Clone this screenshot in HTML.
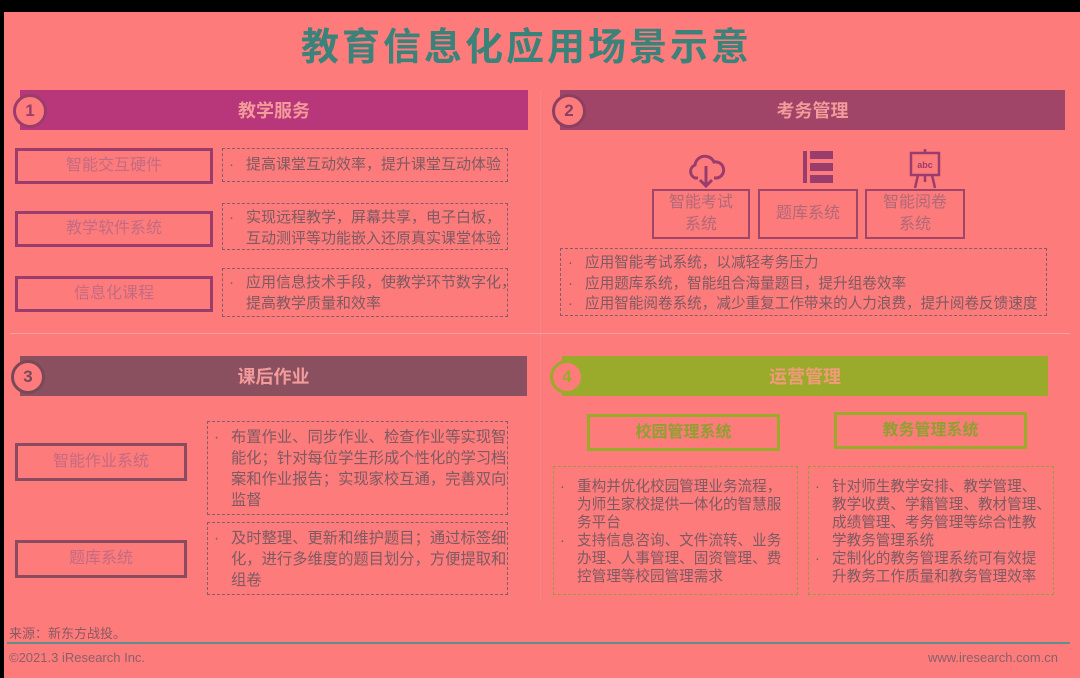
<!DOCTYPE html>
<html><head><meta charset="utf-8"><style>
*{margin:0;padding:0;box-sizing:border-box}
body{width:1080px;height:678px;background:#fd7b7b;position:relative;overflow:hidden;font-family:"Liberation Sans","Noto Sans CJK SC",sans-serif;color:#7d5a62}
.a{position:absolute}
.bar{position:absolute;height:40px;color:#f39a9a;font-weight:bold;font-size:18px;display:flex;align-items:center;justify-content:center}
.circ{position:absolute;width:34px;height:34px;border-radius:50%;border:3px solid;background:#fd7b7b;font-weight:bold;font-size:17px;display:flex;align-items:center;justify-content:center}
.box{position:absolute;border:3px solid #9a3c6c;display:flex;align-items:center;justify-content:center;font-size:16px;color:#c46a82;text-align:center;line-height:22px}
.dash{position:absolute;border:1.5px dashed #8a5a68;font-size:15px;line-height:21px;padding:3px 0 0 23px;white-space:nowrap}
.dash p{position:relative}
.dash p:before{content:"·";position:absolute;left:-17px}
</style></head><body>
<div class="a" style="left:0;top:0;width:1080px;height:12px;background:#000"></div>
<div class="a" style="left:0;top:0;width:4px;height:678px;background:#000"></div>
<div class="a" style="left:0;top:16px;width:1053px;text-align:center;font-size:38px;font-weight:bold;color:#3a827a;letter-spacing:3px">教育信息化应用场景示意</div>

<div class="a" style="left:540px;top:90px;width:1px;height:510px;background:#f08a8a"></div>
<div class="a" style="left:10px;top:333px;width:1060px;height:1px;background:#f2a0a0"></div>

<!-- 1 -->
<div class="bar" style="left:20px;top:90px;width:508px;background:#b8367a">教学服务</div>
<div class="circ" style="left:13px;top:94px;border-color:#9a3c6c;color:#9a3c6c">1</div>
<div class="box" style="left:15px;top:148px;width:198px;height:36px">智能交互硬件</div>
<div class="box" style="left:15px;top:211px;width:198px;height:36px">教学软件系统</div>
<div class="box" style="left:15px;top:276px;width:198px;height:36px">信息化课程</div>
<div class="dash" style="left:222px;top:148px;width:286px;height:34px;padding-top:5px"><p>提高课堂互动效率，提升课堂互动体验</p></div>
<div class="dash" style="left:222px;top:203px;width:286px;height:47px"><p>实现远程教学，屏幕共享，电子白板，<br>互动测评等功能嵌入还原真实课堂体验</p></div>
<div class="dash" style="left:222px;top:268px;width:286px;height:49px"><p>应用信息技术手段，使教学环节数字化，<br>提高教学质量和效率</p></div>

<!-- 2 -->
<div class="bar" style="left:560px;top:90px;width:505px;background:#a04468">考务管理</div>
<div class="circ" style="left:552px;top:94px;border-color:#8a4060;color:#8a4060">2</div>
<svg class="a" style="left:686px;top:150px" width="40" height="40" viewBox="0 0 40 40" fill="none" stroke="#9a3c6c" stroke-width="3"><path d="M12 28 H9 A7 7 0 0 1 9 15 A10 10 0 0 1 28 12 A8 8 0 0 1 31 28 H28"/><path d="M20 16 V36 M14 30 L20 36 L26 30"/></svg>
<svg class="a" style="left:802px;top:150px" width="32" height="36" viewBox="0 0 32 36"><g fill="#9a3c6c"><rect x="8" y="1" width="23" height="8"/><rect x="8" y="13" width="23" height="8"/><rect x="8" y="25" width="23" height="8"/><rect x="1" y="1" width="4" height="32"/></g><rect x="5" y="3" width="3" height="28" fill="#fd7b7b"/></svg>
<svg class="a" style="left:908px;top:148px" width="34" height="42" viewBox="0 0 34 42" fill="none" stroke="#9a3c6c" stroke-width="2.5"><path d="M17 1 V5"/><rect x="3" y="5" width="28" height="22"/><path d="M10 27 L7 40 M24 27 L27 40 M17 27 V34"/><text x="17" y="20" font-size="9" font-weight="bold" fill="#9a3c6c" stroke="none" text-anchor="middle" font-family="Liberation Sans">abc</text></svg>
<div class="box" style="left:652px;top:189px;width:98px;height:50px;border:2px solid #a04468;color:#b06878">智能考试<br>系统</div>
<div class="box" style="left:758px;top:189px;width:100px;height:50px;border:2px solid #a04468;color:#b06878">题库系统</div>
<div class="box" style="left:865px;top:189px;width:100px;height:50px;border:2px solid #a04468;color:#b06878">智能阅卷<br>系统</div>
<div class="dash" style="left:560px;top:248px;width:487px;height:68px;padding-top:4px;font-size:14.6px;line-height:20.5px;padding-left:24px"><p>应用智能考试系统，以减轻考务压力</p><p>应用题库系统，智能组合海量题目，提升组卷效率</p><p>应用智能阅卷系统，减少重复工作带来的人力浪费，提升阅卷反馈速度</p></div>

<!-- 3 -->
<div class="bar" style="left:20px;top:356px;width:507px;background:#8a5060">课后作业</div>
<div class="circ" style="left:11px;top:360px;border-color:#7a4858;color:#7a4858">3</div>
<div class="box" style="left:15px;top:443px;width:172px;height:38px;border-color:#8a4a60">智能作业系统</div>
<div class="box" style="left:15px;top:540px;width:172px;height:38px;border-color:#8a4a60">题库系统</div>
<div class="dash" style="left:207px;top:421px;width:301px;height:94px;padding-top:5px;font-size:15.3px"><p>布置作业、同步作业、检查作业等实现智<br>能化；针对每位学生形成个性化的学习档<br>案和作业报告；实现家校互通，完善双向<br>监督</p></div>
<div class="dash" style="left:207px;top:522px;width:301px;height:73px;padding-top:5px;font-size:15.3px"><p>及时整理、更新和维护题目；通过标签细<br>化，进行多维度的题目划分，方便提取和<br>组卷</p></div>

<!-- 4 -->
<div class="bar" style="left:562px;top:356px;width:486px;background:#9aaa2a;color:#f39a7a">运营管理</div>
<div class="circ" style="left:550px;top:360px;border-color:#9aaa2a;color:#9aaa2a">4</div>
<div class="box" style="left:587px;top:414px;width:193px;height:37px;border-color:#9aaa2a;color:#90a030;font-weight:bold">校园管理系统</div>
<div class="box" style="left:834px;top:412px;width:193px;height:37px;border-color:#9aaa2a;color:#90a030;font-weight:bold">教务管理系统</div>
<div class="dash" style="left:553px;top:466px;width:245px;height:129px;border-color:#9a9a40;line-height:18px;padding-top:11px;font-size:14.6px"><p>重构并优化校园管理业务流程，<br>为师生家校提供一体化的智慧服<br>务平台</p><p>支持信息咨询、文件流转、业务<br>办理、人事管理、固资管理、费<br>控管理等校园管理需求</p></div>
<div class="dash" style="left:808px;top:466px;width:246px;height:129px;border-color:#9a9a40;line-height:18px;padding-top:11px;font-size:14.6px"><p>针对师生教学安排、教学管理、<br>教学收费、学籍管理、教材管理、<br>成绩管理、考务管理等综合性教<br>学教务管理系统</p><p>定制化的教务管理系统可有效提<br>升教务工作质量和教务管理效率</p></div>

<div class="a" style="left:9px;top:623px;font-size:13px;color:#8a5a62">来源：新东方战投。</div>
<div class="a" style="left:7px;top:642px;width:1063px;height:2px;background:#5f8f8a"></div>
<div class="a" style="left:9px;top:650px;font-size:13px;color:#8a6068">©2021.3 iResearch Inc.</div>
<div class="a" style="right:22px;top:650px;font-size:13px;color:#8a6068">www.iresearch.com.cn</div>
</body></html>
